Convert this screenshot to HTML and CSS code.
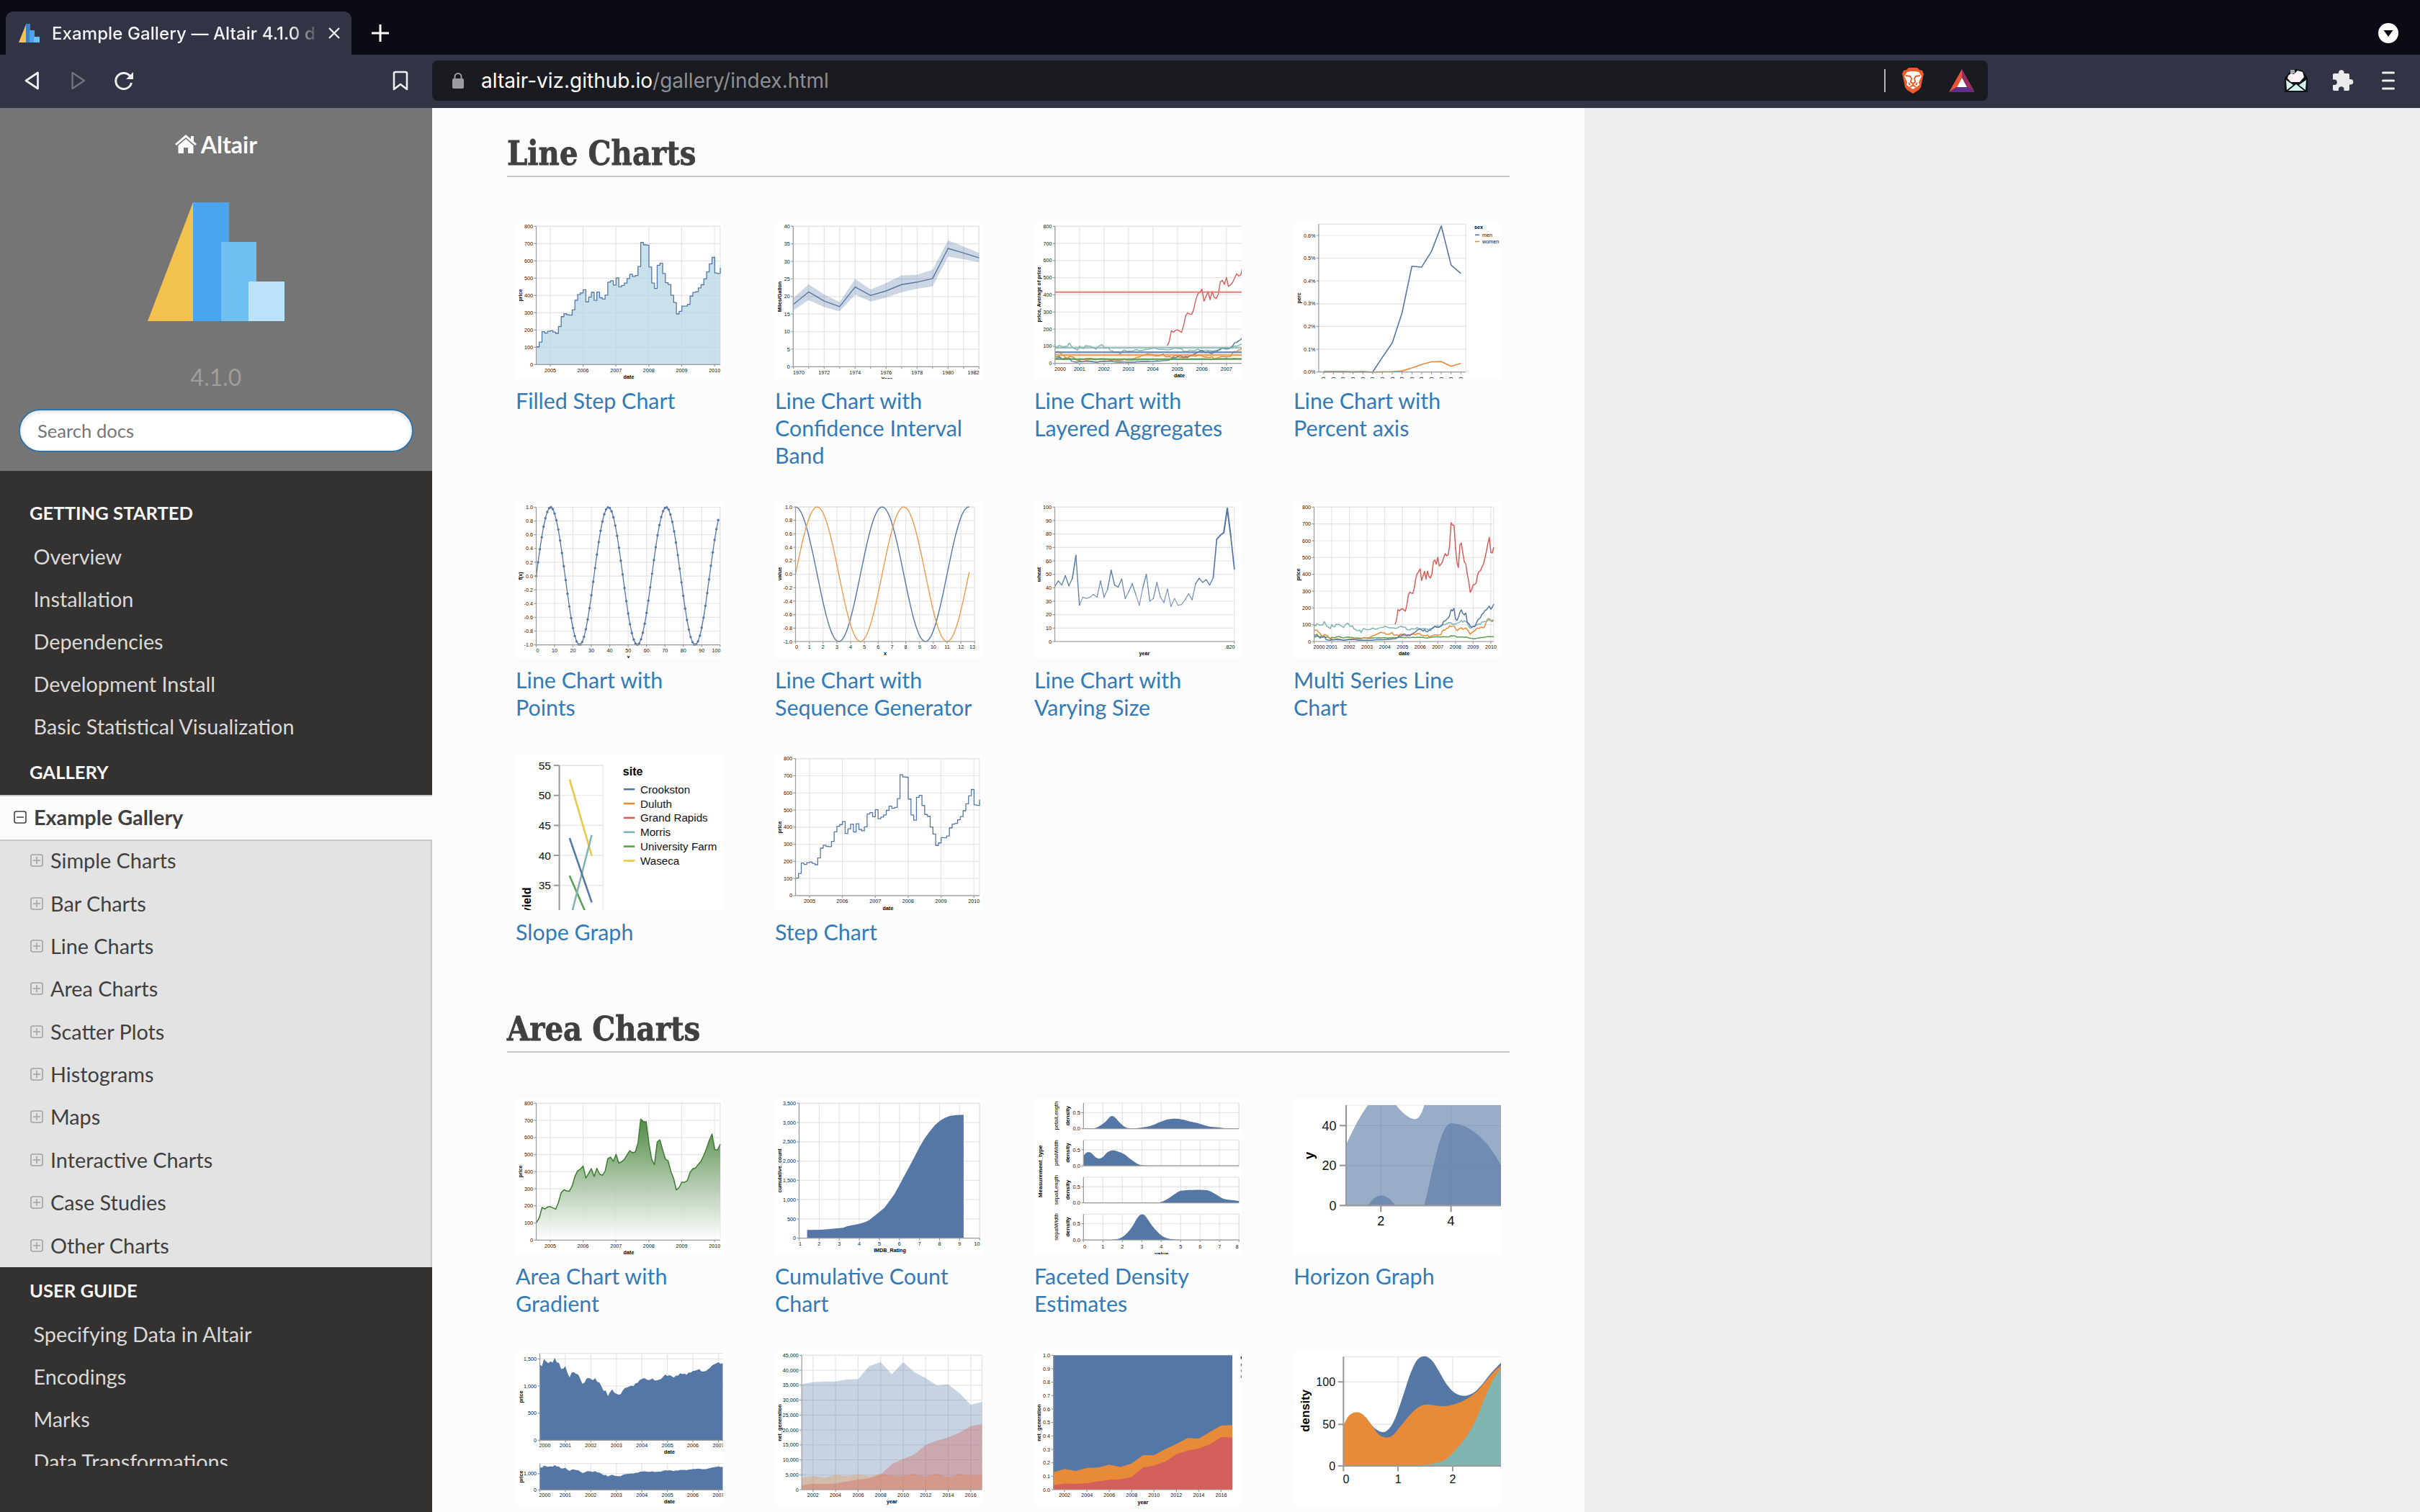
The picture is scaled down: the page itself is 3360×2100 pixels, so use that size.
FILE: index.html
```html
<!DOCTYPE html>
<html lang="en">
<head>
<meta charset="utf-8">
<title>Example Gallery — Altair 4.1.0 documentation</title>
<link rel="stylesheet" href="styles.css">
</head>
<body>
<svg class="defs" width="0" height="0">
  <symbol id="plus" viewBox="0 0 18 18"><rect x="1" y="1" width="16" height="16" rx="2.5" fill="none" stroke="currentColor" stroke-width="1.6"/><path d="M4 9h10M9 4v10" stroke="currentColor" stroke-width="1.5"/></symbol>
  <symbol id="minus" viewBox="0 0 18 18"><rect x="1" y="1" width="16" height="16" rx="2.5" fill="none" stroke="currentColor" stroke-width="1.6"/><path d="M4 9h10" stroke="currentColor" stroke-width="1.5"/></symbol>
</svg>

<header class="browser">
  <div class="tabstrip">
    <div class="tab">
      <svg class="favicon" width="30" height="26" viewBox="0 0 30 26"><path d="M0 26L10 1V26z" fill="#f2c14e"/><path d="M10 0h6v26h-6z" fill="#3b82c9"/><path d="M15 9h7v17h-7z" fill="#4aa5ee"/><path d="M21 18h8v8h-8z" fill="#6fbff2"/></svg>
      <span class="tab-title">Example Gallery — Altair 4.1.0 d</span>
      <svg width="18" height="18" viewBox="0 0 18 18"><path d="M2 2l14 14M16 2L2 16" stroke="#eee" stroke-width="2.4"/></svg>
    </div>
    <svg class="newtab" width="26" height="26" viewBox="0 0 26 26"><path d="M13 1v24M1 13h24" stroke="#fff" stroke-width="3"/></svg>
    <svg class="tabsearch" width="28" height="28" viewBox="0 0 28 28"><circle cx="14" cy="14" r="14" fill="#fff"/><path d="M7.5 10h13L14 19z" fill="#0b0b15"/></svg>
  </div>
  <div class="toolbar">
    <svg class="back" width="24" height="28" viewBox="0 0 24 28"><path d="M20.5 3v22L4 14z" fill="none" stroke="#eee" stroke-width="2.8" stroke-linejoin="round"/></svg>
    <svg class="forward" width="24" height="28" viewBox="0 0 24 28"><path d="M3.5 3v22L20 14z" fill="none" stroke="#70727e" stroke-width="2.4" stroke-linejoin="round"/></svg>
    <svg class="reload" width="28" height="28" viewBox="0 0 28 28"><path d="M23 8.5A11 11 0 1 0 24.5 17" fill="none" stroke="#eee" stroke-width="3"/><path d="M27 2v10h-10z" fill="#eee"/></svg>
    <svg class="bookmark" width="22" height="28" viewBox="0 0 22 28"><path d="M2 4a2 2 0 0 1 2-2h14a2 2 0 0 1 2 2v22l-9-7-9 7z" fill="none" stroke="#eee" stroke-width="2.6" stroke-linejoin="round"/></svg>
    <div class="urlbar">
      <svg class="lock" width="16" height="22" viewBox="0 0 16 22"><rect y="8" width="16" height="14" rx="2" fill="#9a9ca1"/><path d="M3.5 9V5.5a4.5 4.5 0 0 1 9 0V9" fill="none" stroke="#9a9ca1" stroke-width="2"/></svg>
      <span class="url"><b>altair-viz.github.io</b>/gallery/index.html</span>
      <i class="divider"></i>
      <svg class="lion" width="32" height="36" viewBox="0 0 32 36"><path d="M10 0h12l3 3 4 1 2 5-1 3-3 15-3 4-8 5-8-5-3-4L2 12 1 9l2-5 4-1z" fill="#ee5b2b"/><path d="M8 6l5-1h6l5 1 4 6-4 8 1 4-9 6-9-6 1-4-4-8z" fill="#fff"/><path d="M6 11l6 1 2 3-1 5 3 2 3-2-1-5 2-3 6-1M16 22v3M10 21l2 3M22 21l-2 3M12 27l4-3 4 3" fill="none" stroke="#ee5b2b" stroke-width="2"/></svg>
      <svg class="bat" width="36" height="32" viewBox="0 0 36 32"><path d="M18 0v12L11 25 0 32z" fill="#ee5232"/><path d="M18 0v12l7 13 11 7z" fill="#972c61"/><path d="M0 32l11-7h14l11 7z" fill="#5f2d8c"/><path d="M18 12l7 13H11z" fill="#fff"/></svg>
    </div>
    <svg class="mail" width="32" height="32" viewBox="0 0 32 32"><path d="M0 12L8 3 16 0l9 2 7 10v20H0z" fill="#101216"/><path d="M5 9l4-3 4 1 5-5 7 2 2 7-6 7H9l-5-5z" fill="#fbf3f6"/><path d="M8 1h6v5H8z" fill="#aaa"/><path d="M2 15l10 7-9 7zM30 15l-10 7 9 7zM5 30l11-9 11 9z" fill="#d5f3ef"/></svg>
    <svg class="puzzle" width="30" height="30" viewBox="0 0 30 30"><path d="M1 7q0-2 2-2h6V4a3.8 3.8 0 0 1 7.6 0v1H22q2 0 2 2v6h1.5a3.8 3.8 0 0 1 0 7.6H24V27q0 2-2 2h-5.500v-2a3.8 3.8 0 0 0-7.6 0v2H3q-2 0-2-2v-6h2a3.8 3.8 0 0 0 0-7.6H1z" fill="#ebebeb"/></svg>
    <svg class="menu" width="18" height="26" viewBox="0 0 18 26"><path d="M1.5 2h15M1.5 13h15M1.5 24h15" stroke="#eee" stroke-width="3" stroke-linecap="round"/></svg>
  </div>
</header>

<div class="page">
  <nav class="sidebar">
    <div class="side-head">
      <a class="home"><svg width="30" height="26" viewBox="0 0 30 26"><path d="M15 0L0 13l2 2L15 4l13 11 2-2-4-3.500V2h-4v4z" fill="#fcfcfc"/><path d="M15 6L4.500 15v11H12v-8h6v8h7.500V15z" fill="#fcfcfc"/></svg><span>Altair</span></a>
      <svg class="logo" width="190" height="165" viewBox="0 0 190 165"><path d="M0 165L63 0V165z" fill="#f2c14e"/><path d="M63 0h50v165H63z" fill="#4aa5ee"/><path d="M102 55h49v110h-49z" fill="#6fbff2"/><path d="M140 110h50v55h-50z" fill="#bae2f8"/></svg>
      <div class="version">4.1.0</div>
      <div class="search">Search docs</div>
    </div>
    <div class="side-menu">
      <p class="caption">GETTING STARTED</p>
      <a>Overview</a><a>Installation</a><a>Dependencies</a><a>Development Install</a><a>Basic Statistical Visualization</a>
      <p class="caption">GALLERY</p>
      <a class="current"><svg width="18" height="18"><use href="#minus"/></svg>Example Gallery</a>
      <div class="sub">
        <a><svg width="18" height="18"><use href="#plus"/></svg>Simple Charts</a>
        <a><svg width="18" height="18"><use href="#plus"/></svg>Bar Charts</a>
        <a><svg width="18" height="18"><use href="#plus"/></svg>Line Charts</a>
        <a><svg width="18" height="18"><use href="#plus"/></svg>Area Charts</a>
        <a><svg width="18" height="18"><use href="#plus"/></svg>Scatter Plots</a>
        <a><svg width="18" height="18"><use href="#plus"/></svg>Histograms</a>
        <a><svg width="18" height="18"><use href="#plus"/></svg>Maps</a>
        <a><svg width="18" height="18"><use href="#plus"/></svg>Interactive Charts</a>
        <a><svg width="18" height="18"><use href="#plus"/></svg>Case Studies</a>
        <a><svg width="18" height="18"><use href="#plus"/></svg>Other Charts</a>
      </div>
      <p class="caption">USER GUIDE</p>
      <a>Specifying Data in Altair</a><a>Encodings</a><a>Marks</a><a>Data Transformations</a>
    </div>
  </nav>

  <main class="content">
    <section>
      <h2><span>Line Charts</span></h2>
      <div class="gallery">
        <a class="card tall"><div class="thumb" data-chart="filledStep"></div><p>Filled Step Chart</p></a>
        <a class="card tall"><div class="thumb" data-chart="band"></div><p>Line Chart with Confidence Interval Band</p></a>
        <a class="card tall"><div class="thumb" data-chart="layered"></div><p>Line Chart with Layered Aggregates</p></a>
        <a class="card tall"><div class="thumb" data-chart="percent"></div><p>Line Chart with Percent axis</p></a>
        <a class="card"><div class="thumb" data-chart="points"></div><p>Line Chart with Points</p></a>
        <a class="card"><div class="thumb" data-chart="sequence"></div><p>Line Chart with Sequence Generator</p></a>
        <a class="card"><div class="thumb" data-chart="wheat"></div><p>Line Chart with Varying Size</p></a>
        <a class="card"><div class="thumb" data-chart="multi"></div><p>Multi Series Line Chart</p></a>
        <a class="card"><div class="thumb" data-chart="slope"></div><p>Slope Graph</p></a>
        <a class="card"><div class="thumb" data-chart="step"></div><p>Step Chart</p></a>
      </div>
    </section>
    <section class="area">
      <h2><span>Area Charts</span></h2>
      <div class="gallery">
        <a class="card"><div class="thumb" data-chart="gradient"></div><p>Area Chart with Gradient</p></a>
        <a class="card"><div class="thumb" data-chart="cumulative"></div><p>Cumulative Count Chart</p></a>
        <a class="card"><div class="thumb" data-chart="faceted"></div><p>Faceted Density Estimates</p></a>
        <a class="card"><div class="thumb" data-chart="horizon"></div><p>Horizon Graph</p></a>
        <a class="card"><div class="thumb" data-chart="interval"></div></a>
        <a class="card"><div class="thumb" data-chart="overlap"></div></a>
        <a class="card"><div class="thumb" data-chart="normalized"></div></a>
        <a class="card"><div class="thumb" data-chart="density"></div></a>
      </div>
    </section>
  </main>
</div>
<script src="charts.js"></script>
</body>
</html>
```

FILE: styles.css
```css
* { box-sizing: border-box; }
body { margin: 0; width: 3360px; height: 2100px; overflow: hidden; background: #eeeeee; font-family: Lato, "Liberation Sans", sans-serif; color: #404040; }
svg { display: block; flex: none; }
.defs { position: absolute; }
p, h2 { margin: 0; }

/* browser chrome */
.browser { height: 150px; background: #313444; font-family: Inter, "Liberation Sans", sans-serif; }
.tabstrip { height: 76px; background: #0b0b15; display: flex; align-items: center; padding: 16px 30px 0 8px; }
.tab { width: 480px; height: 60px; background: #313444; border-radius: 10px 10px 0 0; display: flex; align-items: center; padding: 0 15px 0 18px; }
.tab-title { flex: 1; margin: 0 14px 0 16px; font-size: 24px; font-weight: 500; color: #f2f2f4; letter-spacing: 0.1px; white-space: nowrap; overflow: hidden; -webkit-mask-image: linear-gradient(90deg, #000 90%, transparent 101%); mask-image: linear-gradient(90deg, #000 90%, transparent 101%); }
.newtab { margin-left: 27px; }
.tabsearch { margin-left: auto; }
.toolbar { height: 74px; display: flex; align-items: center; padding: 0 35px 2px 32px; }
.forward { margin-left: 41px; }
.reload { margin-left: 37px; }
.bookmark { margin-left: 359px; }
.urlbar { width: 2160px; height: 56px; margin-left: 33px; background: #1a1b20; border-radius: 8px; display: flex; align-items: center; padding: 0 18px 0 28px; }
.url { margin-left: 24px; flex: 1; font-size: 28px; color: #8d8e93; letter-spacing: 0; }
.url b { font-weight: 400; color: #fff; }
.divider { width: 2px; height: 32px; background: #b5b5b8; }
.lion { margin-left: 22px; }
.bat { margin-left: 34px; }
.mail { margin-left: 412px; }
.puzzle { margin-left: 34px; }
.menu { margin-left: 39px; }

.page { height: 1950px; display: flex; overflow: hidden; }

/* sidebar */
.sidebar { width: 600px; background: #343230; }
.side-head { height: 504px; background: #757575; display: flex; flex-direction: column; align-items: center; }
.home { display: flex; align-items: center; gap: 6px; height: 40px; margin-top: 30px; font-size: 32px; font-weight: 700; color: #fcfcfc; }
.logo { margin-top: 61px; }
.version { margin-top: 58px; line-height: 40px; font-size: 32px; color: #9e9e9e; }
.search { width: 548px; height: 60px; margin-top: 24px; border: 2px solid #2f74aa; border-radius: 30px; background: #fff; box-shadow: inset 0 2px 6px #ddd; padding-left: 24px; line-height: 57px; font-size: 25.6px; color: #757575; }
.side-menu { height: 1382px; padding-top: 26px; overflow: hidden; }
.side-menu a { display: flex; align-items: center; height: 59.2px; padding: 0 0 2px 46.5px; font-size: 28.8px; color: #d9d9d9; white-space: nowrap; }
.side-menu .caption { height: 64px; line-height: 64px; padding-left: 41px; font-size: 25.6px; font-weight: 700; color: #f7f7f7; }
.side-menu .current { height: 62px; padding-left: 19px; padding-bottom: 2px; gap: 10px; background: #fcfcfc; border-top: 2px solid #c9c9c9; color: #404040; font-weight: 700; }
.sub { background: #e3e3e3; border-right: 2px solid #c9c9c9; box-shadow: inset 0 2px #c9c9c9; height: 594px; }
.side-menu .sub a { height: 59.4px; padding-left: 42px; padding-bottom: 1px; gap: 10px; color: #404040; }
.sub svg { color: #a3a3a3; }

/* content */
.content { width: 1600px; background: #fcfcfc; padding: 0 104px; }
h2 { height: 96px; padding-top: 33px; line-height: 60px; border-bottom: 2px solid #c9c9c9; font-family: "DejaVu Serif", serif; font-size: 47px; font-weight: 700; color: #404040; white-space: nowrap; }
h2 span { display: inline-block; transform: scaleX(.857); transform-origin: 0 0; -webkit-text-stroke: 0.8px #404040; }
.gallery { display: grid; grid-template-columns: repeat(4, 288px); column-gap: 72px; row-gap: 46px; padding: 62px 0 0 12px; }
.area h2 { margin-top: 52px; }
.area .gallery { padding-top: 64px; }
.thumb { width: 288px; height: 216px; background: #fff; overflow: hidden; }
.tall .thumb { height: 218px; }
.card p { margin: 11px 0 1px; line-height: 38px; font-size: 30.4px; color: #337ab7; }
.thumb svg { font-family: "Liberation Sans", sans-serif; }
```

FILE: charts.js
```js
const BLUE = '#5577a5', ORANGE = '#e88b38', RED = '#d45f5b', TEAL = '#81b5b1', GREEN = '#5ba053', YELLOW = '#e9c946';
const GRID = '#e4e4e4', AXIS = '#999';

const goog = [102.37,129.6,190.64,181.98,192.79,195.62,187.99,180.51,220,277.27,294.15,287.76,286,316.46,372.14,404.91,414.86,432.66,362.62,390,417.94,371.82,419.33,386.6,378.53,401.9,476.39,484.81,460.48,501.5,449.45,458.16,471.38,497.91,522.7,510,515.25,567.27,707,693,691.48,564.3,471.18,440.47,574.29,585.8,526.42,473.75,463.29,400.52,359.36,292.96,307.65,338.53,337.99,348.06,395.97,417.23,421.59,443.05,461.67,495.85,536.12,583,619.98,529.94,526.8,560.19];
const msft = [39.81,36.35,43.22,28.37,25.45,32.54,28.4,28.4,24.53,28.02,23.34,17.65,24.84,24,22.25,27.56,28.14,29.7,26.93,23.21,20.82,23.65,26.12,26.95,25.92,23.73,24.53,21.26,20.71,22.25,19.52,19.97,17.79,21.75,23.46,21.03,19.31,19.34,19.76,20.87,20.09,20.93,21.56,21.65,22.69,21.45,21.1,22.46,22.69,21.77,20.46,21.45,21.53,23.44,23.38,22.47,22.76,23.02,24.6,24.52,24.11,23.15,22.24,23.28,23.82,22.93,23.64,25.35,23.83,23.8,25.71,24.29,26.14,25.04,25.36,22.5,21.19,21.8,22.51,24.13,25.68,26.96,27.66,28.13,29.07,26.63,26.35,28.3,29.11,27.95,27.5,27.34,28.04,35.03,32.09,34,31.13,26.07,27.21,27.34,27.25,26.47,24.75,26.36,25.78,21.57,19.66,18.91,16.63,15.81,17.99,19.84,20.59,23.42,23.18,24.43,25.49,27.48,29.27,30.34,28.05,28.67,28.8];
const amzn = [64.56,68.87,67,55.19,48.31,36.31,30.12,41.5,38.44,36.62,24.69,15.56,17.31,10.19,10.23,15.78,16.69,14.15,12.49,8.94,5.97,6.98,11.32,10.82,14.19,14.1,14.3,16.69,18.23,16.25,14.45,14.94,15.93,19.36,23.35,18.89,21.85,22.01,26.03,28.69,35.89,36.32,41.64,46.32,48.43,54.43,53.97,52.62,50.4,43.01,43.28,43.6,48.5,54.4,38.92,38.14,40.86,34.13,39.68,44.29,43.22,35.18,34.27,32.36,35.51,33.09,45.15,42.7,45.3,39.86,48.46,47.15,44.82,37.44,36.53,35.21,34.61,38.68,26.89,30.83,32.12,38.09,40.34,39.46,37.67,39.14,39.79,61.33,69.14,68.41,78.54,79.91,93.15,89.15,90.56,92.64,77.7,64.47,71.3,78.63,81.62,73.33,76.34,80.81,72.76,57.24,42.7,51.28,58.82,64.79,73.44,80.52,77.99,83.66,85.76,81.19,93.36,118.81,135.91,134.52,125.41,118.4,128.82];
const ibm = [100.52,92.11,106.11,99.95,96.31,98.33,100.74,118.62,101.19,88.5,84.12,76.47,100.76,89.98,86.63,103.7,100.82,102.35,94.87,90.25,82.82,97.58,104.5,109.36,97.54,88.82,94.15,75.82,72.97,65.31,63.86,68.52,53.01,71.76,79.16,70.58,71.22,71.13,71.57,77.47,80.48,75.42,74.28,75.12,80.91,81.96,83.08,85.05,91.06,88.7,84.41,81.04,81.59,81.19,80.19,78.17,79.13,82.84,87.15,91.16,86.39,85.78,84.66,70.77,70.18,68.93,77.53,75.07,74.7,76.25,82.98,76.73,75.89,75.09,77.17,77.05,75.04,72.15,72.7,76.35,77.26,87.06,86.95,91.9,93.79,88.18,89.44,96.98,101.54,100.25,105.4,111.54,112.6,111,100.9,103.7,102.75,109.64,110.87,116.23,125.14,114.6,123.74,118.16,113.53,90.24,79.65,82.15,89.46,90.32,95.09,101.29,104.85,103.01,116.34,117,118.55,119.54,125.79,130.32,121.85,127.16,125.55];
const aapl = [25.94,28.66,33.95,31.01,21,26.19,25.41,30.47,12.88,9.78,8.25,7.44,10.81,9.12,11.03,12.74,9.98,11.62,9.4,9.27,7.76,8.78,10.65,10.95,12.36,10.85,11.84,12.14,11.65,8.86,7.63,7.38,7.25,8.03,7.75,7.16,7.18,7.51,7.07,7.11,8.98,9.53,10.54,11.31,10.36,11.44,10.45,10.69,11.28,11.96,13.52,12.89,14.03,16.27,16.17,17.25,19.38,26.2,33.53,32.2,38.45,44.86,41.67,36.06,39.76,36.81,42.65,46.89,53.61,57.59,67.82,71.89,75.51,68.49,62.72,70.39,59.77,57.27,67.96,67.85,76.98,81.08,91.66,84.84,85.73,84.61,92.91,99.8,121.19,122.04,131.76,138.48,153.47,189.95,182.22,198.08,135.36,125.02,143.5,173.95,188.75,167.44,158.95,169.53,113.66,107.59,92.67,85.35,90.13,89.31,105.12,125.83,135.81,142.43,163.39,168.21,185.35,188.5,199.91,210.73,192.06,204.62,223.02];
const sp500 = [1394.46,1366.42,1498.58,1452.43,1420.6,1454.6,1430.83,1517.68,1436.51,1429.4,1314.95,1320.28,1366.01,1239.94,1160.33,1249.46,1255.82,1224.38,1211.23,1133.58,1040.94,1059.78,1139.45,1148.08,1130.2,1106.73,1147.39,1076.92,1067.14,989.82,911.62,916.07,815.28,885.76,936.31,879.82,855.7,841.15,848.18,916.92,963.59,974.5,990.31,1008.01,995.97,1050.71,1058.2,1111.92,1131.13,1144.94,1126.21,1107.3,1120.68,1140.84,1101.72,1104.24,1114.58,1130.2,1173.82,1211.92,1181.27,1203.6,1180.59,1156.85,1191.5,1191.33,1234.18,1220.33,1228.81,1207.01,1249.48,1248.29,1280.08,1280.66,1294.87,1310.61,1270.09,1270.2,1276.66,1303.82,1335.85,1377.94,1400.63,1418.3,1438.24,1406.82,1420.86];
const wheat = [41,45,42,49,41.5,47,64,27,33,32,33,35,33,45,33,39,53,42,40.5,46.5,32,37,43,35,27,40,50,30,32,44,33,29,39,26,32,27,27.5,31,35.5,31,43,47,44,46,42,47.5,76,79,81,99,78,54];
const fossil = [35361,35991,36234,36205,36883,37014,41389,42734,38620,42750,39361,37379,34873,35250,32319,28437,29329];
const nuclear = [3853,4574,3988,4929,4538,5095,4519,5282,4679,4451,5215,4347,5321,4152,5243,4703,5214];
const renew = [1437,1963,1885,2102,2724,3364,3870,5070,8560,10308,11795,14949,16476,17452,19091,21241,21933];

const scale = (d0, d1, r0, r1) => v => r0 + (v - d0) / (d1 - d0) * (r1 - r0);
const range = (a, b, s = 1) => { const o = []; for (let v = a; v <= b + 1e-9; v += s) o.push(v); return o; };
const line = (x1, y1, x2, y2, c, w = 1.2) => `<line x1="${x1}" y1="${y1}" x2="${x2}" y2="${y2}" stroke="${c}" stroke-width="${w}"/>`;
const text = (x, y, s, size = 7.2, anchor = 'middle', bold = false) => `<text x="${x}" y="${y + size * .36}" font-size="${size}" text-anchor="${anchor}" fill="${bold ? '#000' : '#111'}"${bold ? ' font-weight="700"' : ''}>${s}</text>`;
const vtext = (x, y, s, size = 7.2, anchor = 'middle', bold = true) => `<text transform="translate(${x + size * .34} ${y}) rotate(-90)" font-size="${size}" text-anchor="${anchor}" fill="#000"${bold ? ' font-weight="700"' : ''}>${s}</text>`;
const pts = p => p.map(q => q[0].toFixed(2) + ',' + q[1].toFixed(2)).join('L');
const stroke = (p, c, w = 1.4) => `<path d="M${pts(p)}" fill="none" stroke="${c}" stroke-width="${w}" stroke-linejoin="round"/>`;
const fill = (p, c, o = 1) => `<path d="M${pts(p)}Z" fill="${c}" fill-opacity="${o}"/>`;
const under = (p, b) => [...p, [p[p.length - 1][0], b], [p[0][0], b]];
const stepAfter = p => p.flatMap((q, i) => i ? [[q[0], p[i - 1][1]], q] : [q]);

/* Catmull-Rom sampling through the given points */
function smooth(p) {
  const out = [];
  for (let i = 0; i < p.length - 1; i++) {
    const a = p[Math.max(i - 1, 0)], b = p[i], c = p[i + 1], d = p[Math.min(i + 2, p.length - 1)];
    for (let k = 0; k < 8; k++) {
      const t = k / 8;
      out.push([0, 1].map(j => .5 * (2 * b[j] + (c[j] - a[j]) * t + (2 * a[j] - 5 * b[j] + 4 * c[j] - d[j]) * t * t + (3 * b[j] - a[j] - 3 * c[j] + d[j]) * t * t * t)));
    }
  }
  out.push(p[p.length - 1]);
  return out;
}

/* plot frame: o.x and o.y are [position, label, labelPosition] lists */
function grid(o) {
  return o.x.filter(t => !o.noV).map(t => line(t[0], o.t, t[0], o.b, GRID)).join('') +
    o.y.map(t => line(o.l, t[0], o.r, t[0], GRID)).join('') +
    line(o.l, o.t, o.r, o.t, GRID) + line(o.r, o.t, o.r, o.b, GRID);
}
function axes(o) {
  const fs = o.fs || 7.2, k = o.tick || 3;
  return line(o.l, o.t, o.l, o.b, AXIS, o.aw) + line(o.l, o.b, o.r, o.b, AXIS, o.aw) +
    o.x.map(t => line(t[0], o.b, t[0], o.b + k, AXIS, o.aw) + (t[1] === '' ? '' : text(t[2] ?? t[0], o.ly, t[1], fs))).join('') +
    o.y.map(t => line(o.l - k, t[0], o.l, t[0], AXIS, o.aw) + text(o.l - k * 1.5, t[0], t[1], fs, 'end')).join('');
}
const comma = v => v.toLocaleString('en-US');

function googFrame(t, b, ly) {
  const y = scale(0, 800, b, t);
  return { l: 28.5, r: 284, t, b, ly, x: range(0, 5).map(i => [47.9 + i * 45.65, 2005 + i]), y: range(0, 800, 100).map(v => [y(v), v]),
    p: goog.map((v, i) => [28.9 + i * 3.808, y(v)]) };
}

const charts = {
  filledStep() {
    const o = googFrame(6.3, 198.3, 206), s = stepAfter(o.p);
    return grid(o) + fill(under(s, o.b), '#b7d7e4', .75) + stroke(s, BLUE, 1.3) + axes(o) + vtext(6.5, 102, 'price') + text(157, 215, 'date', 7.2, 'middle', true);
  },
  band() {
    const x = scale(1970, 1982, 25.3, 283.3), y = scale(0, 40, 201.3, 6.3);
    const o = { l: 25.3, r: 283.3, t: 6.3, b: 201.3, ly: 209, x: range(1970, 1982).map(v => [x(v), v % 2 ? '' : v, v == 1970 ? 33 : v == 1982 ? 275.5 : x(v)]), y: range(0, 40, 5).map(v => [y(v), v]) };
    const P = a => a.map((v, i) => [x(1970 + i), y(v)]);
    const lo = P([16,19,17,15.8,20.5,18.6,19.7,21.2,22.2,22.9,31.4,30.6,29.8]), hi = P([19.5,23.5,20.6,18.4,25,22,23.8,26,26.2,27.6,36,34.2,32.4]);
    return grid(o) + fill([...hi, ...lo.reverse()], BLUE, .3) + stroke(P([17.7,21.3,18.7,17.1,22.7,20.3,21.6,23.4,24.1,25.1,33.7,32.4,31]), BLUE) + axes(o) + vtext(6.5, 104, 'Miles/Gallon') + text(155, 218, 'Year', 7.2, 'middle', true);
  },
  layered() {
    const y = scale(0, 800, 196.7, 6.3), X = i => 28.9 + i * 2.832;
    const o = { l: 28.9, r: 295, t: 6.3, b: 196.7, ly: 204.3, x: range(0, 7).map(i => [X(i * 12), 2000 + i, i ? X(i * 12) : 36]), y: range(0, 800, 100).map(v => [y(v), v]) };
    const s = (a, c, off = 0) => stroke(a.map((v, i) => [X(i + off), y(v)]), c, 1.4);
    const r = (v, c) => line(28.9, y(v), 290, y(v), c, 2.6);
    return grid(o) + s(msft, GREEN) + s(amzn, ORANGE) + s(ibm, TEAL) + s(aapl, BLUE) + s(goog, RED, 55) +
      '<g opacity=".8">' + r(415.9, '#dd7774') + r(91.3, TEAL) + r(64.7, BLUE) + r(48, ORANGE) + r(25, GREEN) + '</g>' + axes(o) + vtext(7, 101, 'price, Average of price') + text(201.5, 213.5, 'date', 7.2, 'middle', true);
  },
  percent() {
    const y = scale(0, .6, 208.7, 19), X = i => 41.8 + i * 13.61;
    const o = { l: 34.9, r: 239.2, t: 3.3, b: 208.7, ly: 230, noV: 1, x: range(0, 14).map(i => [X(i), '']), y: range(0, 6).map(i => [y(i / 10), `0.${i}%`]) };
    const s = (a, c) => stroke(a.map((v, i) => [X(i), y(v)]), c, 1.6);
    return grid(o) + s([.002,.002,.002,.001,.002,0,.065,.128,.26,.465,.461,.53,.642,.47,.433], BLUE) + s([0,0,0,0,0,0,.001,.002,.005,.018,.033,.045,.046,.025,.038], ORANGE) + axes(o) +
      range(0, 14).map(i => vtext(X(i), 217.6, '0', 7.2, 'middle', false)).join('') + vtext(8, 106, 'perc') +
      text(251, 7.3, 'sex', 7.2, 'start', true) + line(252, 18.3, 258, 18.3, BLUE, 1.6) + text(262, 18.3, 'men', 7.2, 'start') + line(252, 27.5, 258, 27.5, ORANGE, 1.6) + text(262, 27.5, 'women', 7.2, 'start');
  },
  points() {
    const x = scale(0, 100, 28.5, 283.8), y = scale(-1, 1, 197.6, 6.5);
    const o = { l: 28.5, r: 283.8, t: 6.5, b: 197.6, ly: 205, x: range(0, 100, 10).map(v => [x(v), v, v == 0 ? 30.5 : v == 100 ? 278.5 : x(v)]), y: range(-5, 5).map(i => [y(i / 5), (i / 5).toFixed(1)]) };
    const p = range(0, 99).map(i => [x(i), y(Math.sin(i / 5))]);
    return grid(o) + stroke(p, BLUE, 1.3) + p.map(q => `<circle cx="${q[0]}" cy="${q[1]}" r="1.7" fill="${BLUE}"/>`).join('') + axes(o) + vtext(7, 102, 'f(x)') + text(156.5, 214, 'x', 7.2, 'middle', true);
  },
  sequence() {
    const x = scale(0, 13, 28.5, 277.3), y = scale(-1, 1, 193, 6.1);
    const o = { l: 28.5, r: 277.3, t: 6.1, b: 193, ly: 200.4, x: range(0, 13).map(v => [x(v), v, v == 0 ? 30 : v == 13 ? 274 : x(v)]), y: range(-5, 5).map(i => [y(i / 5), (i / 5).toFixed(1)]) };
    const t = range(0, 12.6, .1);
    return grid(o) + stroke(t.map(v => [x(v), y(Math.cos(v))]), BLUE) + stroke(t.map(v => [x(v), y(Math.sin(v))]), '#ef9a4b') + axes(o) + vtext(7, 99, 'value') + text(153, 209.8, 'x', 7.2, 'middle', true);
  },
  wheat() {
    const y = scale(0, 100, 193, 6.3), x = scale(0, 51, 28.5, 277.8);
    const o = { l: 28.5, r: 277.8, t: 6.3, b: 193, ly: 200.3, noV: 1, x: [[277.8, '.820', 271.5]], y: range(0, 100, 10).map(v => [y(v), v]) };
    let s = '';
    for (let i = 0; i < 51; i++) s += `<path d="M${x(i)} ${y(wheat[i])}L${x(i + 1)} ${y(wheat[i + 1])}" stroke="${BLUE}" stroke-linecap="round" stroke-opacity="${Math.min(1, .35 + (wheat[i] + wheat[i + 1]) / 160)}" stroke-width="${.7 + (wheat[i] + wheat[i + 1]) / 130}"/>`;
    return grid(o) + s + axes(o) + vtext(7, 100, 'wheat') + text(153, 209.7, 'year', 7.2, 'middle', true);
  },
  multi() {
    const y = scale(0, 800, 193, 6.3), X = i => 28.5 + i * 2.045;
    const o = { l: 28.5, r: 277.8, t: 6.3, b: 193, ly: 200.3, x: range(0, 10).map(i => [X(i * 12), 2000 + i, i ? X(i * 12) : 35.6]), y: range(0, 800, 100).map(v => [y(v), v]) };
    const s = (a, c, off = 0) => stroke(a.map((v, i) => [X(i + off), y(v)]), c, 1.5);
    return grid(o) + s(msft, GREEN) + s(amzn, ORANGE) + s(ibm, TEAL) + s(aapl, BLUE) + s(goog, RED, 55) + axes(o) + vtext(7, 100, 'price') + text(153.5, 209.5, 'date', 7.2, 'middle', true);
  },
  slope() {
    const y = v => 15.1 + (55 - v) * 8.33;
    const o = { l: 60.6, r: 121.2, t: 15.1, b: 260, ly: 300, fs: 15.5, tick: 7.8, aw: 2, x: [], y: [55, 50, 45, 40, 35].map(v => [y(v), v]) };
    const names = [['Crookston', BLUE], ['Duluth', ORANGE], ['Grand Rapids', RED], ['Morris', TEAL], ['University Farm', GREEN], ['Waseca', YELLOW]];
    return grid(o) + axes(o) + stroke([[74.8, 34.3], [105.6, 140.4]], YELLOW, 2.6) + stroke([[74.8, 168.2], [105.6, 239]], GREEN, 2.6) + stroke([[105.6, 111.8], [74.8, 232]], TEAL, 2.6) + stroke([[74.8, 115.9], [105.6, 205.3]], BLUE, 2.6) +
      text(148.8, 23, 'site', 16, 'start', true) + names.map((n, i) => line(150, 48.2 + i * 19.85, 165.3, 48.2 + i * 19.85, n[1], 2.6) + text(173, 48.2 + i * 19.85, n[0], 15.2, 'start')).join('') + vtext(16, 184.5, 'yield', 16, 'end');
  },
  step() {
    const o = googFrame(5.7, 195.9, 203.5);
    return grid(o) + stroke(stepAfter(o.p), BLUE, 1.3) + axes(o) + vtext(6.5, 101, 'price') + text(157, 213, 'date', 7.2, 'middle', true);
  },
  gradient() {
    const o = googFrame(6.3, 196.3, 204);
    return '<defs><linearGradient id="greenFade" gradientUnits="userSpaceOnUse" x1="0" y1="28" x2="0" y2="196"><stop offset="0" stop-color="#3d7c31" stop-opacity=".9"/><stop offset="1" stop-color="#fff" stop-opacity=".85"/></linearGradient></defs>' +
      grid(o) + fill(under(o.p, o.b), 'url(#greenFade)') + stroke(o.p, '#3d7c31', 1.5) + axes(o) + vtext(6.5, 101, 'price') + text(157, 213, 'date', 7.2, 'middle', true);
  },
  cumulative() {
    const x = scale(1, 10, 33.5, 284.2), y = scale(0, 3500, 193.7, 6.3);
    const o = { l: 33.5, r: 284.2, t: 6.3, b: 193.7, ly: 201.3, x: range(1, 10).map(v => [x(v), v, v == 1 ? 35 : v == 10 ? 280.5 : x(v)]), y: range(0, 3500, 500).map(v => [y(v), comma(v)]) };
    const p = [[1.4,215],[2.1,220],[3.2,272],[3.4,312],[4,372],[4.3,420],[4.5,470],[5,680],[5.25,790],[5.5,960],[5.75,1145],[6,1375],[6.25,1625],[6.5,1860],[6.75,2110],[7,2360],[7.25,2580],[7.5,2765],[7.75,2920],[8,3040],[8.25,3120],[8.5,3170],[8.8,3195],[9.2,3203]].map(q => [x(q[0]), y(q[1])]);
    return grid(o) + fill(under(p, o.b), BLUE) + axes(o) + vtext(7, 100, 'cumulative_count') + text(159.5, 210.5, 'IMDB_Rating', 7.2, 'middle', true);
  },
  faceted() {
    const x = scale(0, 8, 68.4, 284.2);
    const data = [
      [[.4,0],[.7,6],[1.07,25],[1.33,47],[1.46,53],[1.62,47],[1.92,21],[2.2,5],[2.6,2],[3,5],[3.5,13],[3.9,27],[4.3,38],[4.7,42],[5.1,38],[5.5,30],[5.85,24],[6.2,15],[6.5,9],[7,5],[7.45,0]],
      [[0,42],[.14,54],[.26,57],[.4,53],[.6,37],[.8,30],[1,37],[1.24,57],[1.5,64],[1.75,60],[2.1,48],[2.4,29],[2.7,12],[2.95,3],[3.3,0]],
      [[3.6,0],[3.97,3],[4.3,15],[4.65,34],[4.9,47],[5.16,52],[5.75,54],[6.27,53],[6.5,49],[6.86,33],[7.17,18],[7.45,13],[7.8,10],[8,7]],
      [[1.4,0],[1.75,4],[2,12],[2.26,30],[2.52,57],[2.74,88],[2.9,103],[3.01,106],[3.15,102],[3.32,84],[3.54,58],[3.8,34],[4.05,16],[4.3,7],[4.65,2],[5.1,0]]];
    const names = ['petalLength', 'petalWidth', 'sepalLength', 'sepalWidth'];
    return data.map((d, i) => {
      const b = 41.7 + i * 51.45;
      const o = { l: 68.4, r: 284.2, t: b - 35.7, b, ly: 205, fs: 7.4, x: range(0, 8).map(v => [x(v), v, v == 0 ? 70 : v == 8 ? 281.5 : x(v)]), y: [[b - 22.3, '0.5'], [b, '0.0']] };
      return grid(o) + fill(under(smooth(d.map(q => [x(q[0]), b - q[1] / 3])), b), BLUE) + axes({ ...o, x: i == 3 ? o.x : [] }) + vtext(46, b - 18, 'density', 7.8) + vtext(30.3, b - 18, names[i], 7.6, 'middle', false);
    }).join('') + vtext(8.3, 100.7, 'Measurement_type', 8) + text(176.8, 215, 'value', 7.6, 'middle', true);
  },
  horizon() {
    const o = { l: 73, r: 300, t: 9, b: 148.3, ly: 170, fs: 18, tick: 9, aw: 2.2, x: [[121.2, 2], [218.6, 4]], y: [[37.3, 40], [92.7, 20], [148.3, 0]] };
    return grid(o) + `<g fill="${BLUE}" fill-opacity=".6"><path d="M73 148.3V64Q89 28 103.3 9H142.3Q158 28.3 168.5 28.3Q176 28.3 181.4 9H288V148.3z"/><path d="M103.3 148.3Q121.2 120 141.4 148.3zM181.4 148.3C193 106 203 34.3 218.6 34.3C243 34.3 269 56 288 92.5V148.3z"/></g>` + axes(o) + vtext(22, 79, 'y', 19);
  },
  interval() {
    const X = i => 33.5 + i * 2.953;
    const part = (t, b, k, ly, ticks) => {
      const o = { l: 33.5, r: 290, t, b, ly, x: range(0, 7).map(i => [X(i * 12), 2000 + i, i ? X(i * 12) : 40.5]), y: ticks.map(v => [b - v * k, comma(v)]) };
      return grid(o) + fill(under(sp500.map((v, i) => [X(i), b - v * k]), b), BLUE) + axes(o) + vtext(7.3, (t + b) / 2, 'price') + text(213.5, ly + 9, 'date', 7.2, 'middle', true);
    };
    return part(3.7, 124.3, .0753, 131.7, [0, 500, 1000, 1500]) + part(156.7, 193.3, .0226, 200.7, [0, 1000]);
  },
  overlap() {
    const y = scale(0, 45000, 193, 6.3), X = i => 37.2 + i * 15.64;
    const o = { l: 37.2, r: 287.4, t: 6.3, b: 193, ly: 200.7, x: range(1, 15, 2).map(i => [X(i), 2001 + i]), y: range(0, 45000, 5000).map(v => [y(v), comma(v)]) };
    const a = (d, c) => fill(under(d.map((v, i) => [X(i), y(v)]), 193), c, .32);
    return grid(o) + a(fossil, BLUE) + a(nuclear, '#e88b38') + a(renew, '#d4504c') + axes(o) + vtext(6.5, 100, 'net_generation') + text(162.5, 209.7, 'year', 7.2, 'middle', true);
  },
  normalized() {
    const y = scale(0, 1, 193, 6.3), X = i => 26.6 + i * 15.525;
    const o = { l: 26.6, r: 275, t: 6.3, b: 193, ly: 200.7, x: range(1, 15, 2).map(i => [X(i), 2001 + i]), y: range(0, 10).map(i => [y(i / 10), (i / 10).toFixed(1)]) };
    const sum = i => fossil[i] + nuclear[i] + renew[i];
    const a = (f, c) => fill(under(fossil.map((_, i) => [X(i), y(f(i))]), 193), c);
    return a(() => 1, BLUE) + a(i => (nuclear[i] + renew[i]) / sum(i), ORANGE) + a(i => renew[i] / sum(i), RED) + axes(o) + vtext(7, 100, 'net_generation') + text(151, 210, 'year', 7.2, 'middle', true) +
      [['#222', 9.7], [BLUE, 19.7], [ORANGE, 27.8], [RED, 36]].map(q => `<rect x="286.7" y="${q[1] - 1.8}" width="2" height="3.6" fill="${q[0]}"/>`).join('');
  },
  density() {
    const o = { l: 69.3, r: 300, t: 8.3, b: 160, ly: 178, fs: 16, tick: 7.5, aw: 2, x: [[69.3, 0, 73], [145.1, 1], [220.9, 2]], y: [[43.3, 100], [102.3, 50], [160, 0]] };
    const P = a => under(smooth(a.map(q => [(q[0] - 862) / 2.1778, q[1] / 3 - 16])), 160);
    return grid(o) + fill(P([[1080,325],[1105,368],[1130,387],[1150,374],[1170,327],[1195,228],[1215,145],[1235,88],[1257,71],[1280,88],[1300,130],[1325,188],[1350,224],[1378,236],[1405,224],[1430,192],[1460,140],[1490,97]]), BLUE) +
      fill(P([[1013,358],[1030,318],[1053,304],[1075,318],[1100,362],[1120,397],[1143,410],[1165,397],[1185,363],[1215,314],[1240,283],[1266,272],[1310,279],[1343,273],[1380,253],[1415,219],[1445,172],[1470,132],[1490,108]]), ORANGE) +
      fill(P([[1200,528],[1260,523],[1300,513],[1325,498],[1350,464],[1380,414],[1410,345],[1440,245],[1465,170],[1490,120]]), TEAL) + axes(o) + vtext(16, 83.3, 'density', 16.8);
  }
};

document.querySelectorAll('.thumb').forEach(el => {
  const h = el.clientHeight;
  el.innerHTML = `<svg width="288" height="${h}" viewBox="0 0 288 ${h}">${charts[el.dataset.chart]()}</svg>`;
});
```
